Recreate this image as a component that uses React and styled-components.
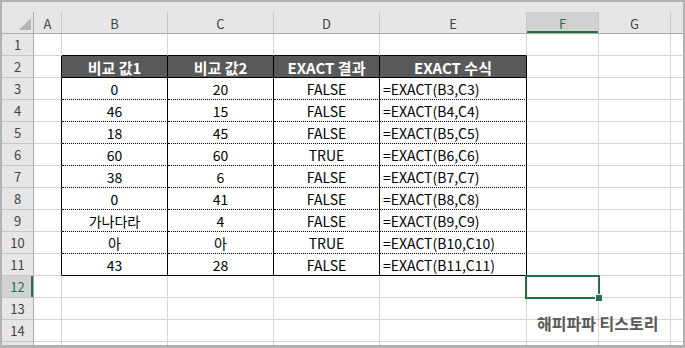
import React from 'react';
import styled, { createGlobalStyle } from 'styled-components';

const GlobalStyle = createGlobalStyle`
    html, body {
        margin: 0;
        padding: 0;
        background: #ffffff;
    }
    * {
        box-sizing: border-box;
    }
`;

const FONT = `"Noto Sans CJK KR", "Noto Sans", sans-serif`;
const GREEN = '#217346';
const GRID = '#d4d4d4';

// widths include the 1px right border of each column
const COLS = [
    { key: 'A', w: 28 },
    { key: 'B', w: 106 },
    { key: 'C', w: 106 },
    { key: 'D', w: 106 },
    { key: 'E', w: 147 },
    { key: 'F', w: 72 },
    { key: 'G', w: 72 },
];

const header = ['비교 값1', '비교 값2', 'EXACT 결과', 'EXACT 수식'];

const data = [
    ['0', '20', 'FALSE'],
    ['46', '15', 'FALSE'],
    ['18', '45', 'FALSE'],
    ['60', '60', 'TRUE'],
    ['38', '6', 'FALSE'],
    ['0', '41', 'FALSE'],
    ['가나다라', '4', 'FALSE'],
    ['아', '아', 'TRUE'],
    ['43', '28', 'FALSE'],
];

const Frame = styled.div`
    position: relative;
    width: 685px;
    height: 348px;
    border: 2px solid #b1b1b1;
    border-bottom-width: 3px;
    overflow: hidden;
    background: #ffffff;
    font-family: ${FONT};
    display: flex;
    flex-direction: column;
`;

const HeaderBar = styled.div`
    display: flex;
    flex: 0 0 auto;
    background: #e6e6e6;
    padding-top: 10px;
    border-bottom: 1px solid #ababab;
`;

const Corner = styled.div`
    position: relative;
    width: 32px;
    height: 21px;
    border-right: 1px solid #ababab;

    &::after {
        content: '';
        position: absolute;
        right: 2px;
        bottom: 3px;
        width: 0;
        height: 0;
        border-left: 12px solid transparent;
        border-bottom: 12px solid #b4b4b4;
    }
`;

const ColHead = styled.div`
    width: ${(p) => p.$w}px;
    height: 21px;
    display: flex;
    align-items: center;
    justify-content: center;
    font-size: 13px;
    color: ${(p) => (p.$active ? GREEN : '#444444')};
    background: ${(p) => (p.$active ? '#d2d2d2' : 'transparent')};
    border-right: 1px solid #c6c6c6;
    box-shadow: ${(p) => (p.$active ? `inset 0 -2px 0 ${GREEN}` : 'none')};
    line-height: 1;
    padding-top: 1px;
`;

const Body = styled.div`
    display: grid;
    grid-template-columns: 32px ${COLS.map((c) => `${c.w}px`).join(' ')} 1fr;
    grid-auto-rows: 22px;
`;

const RowHead = styled.div`
    display: flex;
    align-items: center;
    justify-content: center;
    font-size: 13px;
    line-height: 1;
    color: ${(p) => (p.$active ? GREEN : '#444444')};
    background: ${(p) => (p.$active ? '#d2d2d2' : '#e6e6e6')};
    border-right: 1px solid #ababab;
    border-bottom: 1px solid #c6c6c6;
    box-shadow: ${(p) => (p.$active ? `inset -2px 0 0 ${GREEN}` : 'none')};
`;

const Cell = styled.div`
    position: relative;
    display: flex;
    align-items: center;
    justify-content: ${(p) => (p.$left ? 'flex-start' : 'center')};
    padding-left: ${(p) => (p.$left ? '3px' : '0')};
    padding-top: 1px;
    font-size: ${(p) => (p.$head ? '15px' : '14px')};
    font-weight: ${(p) => (p.$head ? 700 : 400)};
    line-height: 1;
    white-space: nowrap;
    color: ${(p) => (p.$head ? '#ffffff' : '#000000')};
    background: ${(p) => (p.$head ? '#595959' : '#ffffff')};
    border-right: ${(p) => p.$right};
    border-bottom: ${(p) => p.$bottom};
    z-index: ${(p) => (p.$selected ? 2 : 'auto')};
`;

const Selection = styled.div`
    position: absolute;
    left: -2px;
    top: -1px;
    width: 75px;
    height: 24px;
    border: 2px solid ${GREEN};
    pointer-events: none;

    &::after {
        content: '';
        position: absolute;
        right: -4px;
        bottom: -4px;
        width: 6px;
        height: 6px;
        background: ${GREEN};
        box-shadow: 0 0 0 1px #ffffff;
    }
`;

const Watermark = styled.div`
    position: absolute;
    left: 535px;
    top: 313px;
    z-index: 3;
    font-family: ${FONT};
    font-size: 16px;
    font-weight: 700;
    line-height: 1;
    color: #595959;
    white-space: nowrap;
`;

const cellText = (r, c) => {
    if (r === 2 && c >= 1 && c <= 4) return header[c - 1];
    if (r >= 3 && r <= 11 && c >= 1 && c <= 4) {
        const row = data[r - 3];
        if (c === 4) return `=EXACT(B${r},C${r})`;
        return row[c - 1];
    }
    return '';
};

const borders = (r, c) => {
    const inRows = r >= 2 && r <= 11;
    const inCols = c >= 1 && c <= 4;
    let right = `1px solid ${GRID}`;
    if (c === 7) right = 'none';
    else if (inRows && c >= 0 && c <= 4) right = '1px solid #000000';

    let bottom = `1px solid ${GRID}`;
    if (inCols) {
        if (r === 1 || r === 2 || r === 11) bottom = '1px solid #000000';
        else if (r >= 3 && r <= 10) bottom = '1px dotted #000000';
    }
    return { right, bottom };
};

// row 15 only peeks in under the last full row, so its number is not shown
const ROWS = Array.from({ length: 15 }, (_, i) => i + 1);

const App = () => {
    return (
        <>
            <GlobalStyle />
            <Frame>
                <HeaderBar>
                    <Corner />
                    {COLS.map((col) => (
                        <ColHead key={col.key} $w={col.w} $active={col.key === 'F'}>
                            {col.key}
                        </ColHead>
                    ))}
                </HeaderBar>
                <Body>
                    {ROWS.map((r) => (
                        <React.Fragment key={r}>
                            <RowHead $active={r === 12}>{r < 15 ? r : ''}</RowHead>
                            {Array.from({ length: 8 }, (_, c) => {
                                const b = borders(r, c);
                                const selected = r === 12 && c === 5;
                                return (
                                    <Cell
                                        key={c}
                                        $right={b.right}
                                        $bottom={b.bottom}
                                        $head={r === 2 && c >= 1 && c <= 4}
                                        $left={c === 4 && r >= 3 && r <= 11}
                                        $selected={selected}
                                    >
                                        {cellText(r, c)}
                                        {selected && <Selection />}
                                    </Cell>
                                );
                            })}
                        </React.Fragment>
                    ))}
                </Body>
                <Watermark>해피파파 티스토리</Watermark>
            </Frame>
        </>
    );
};

export default App;
